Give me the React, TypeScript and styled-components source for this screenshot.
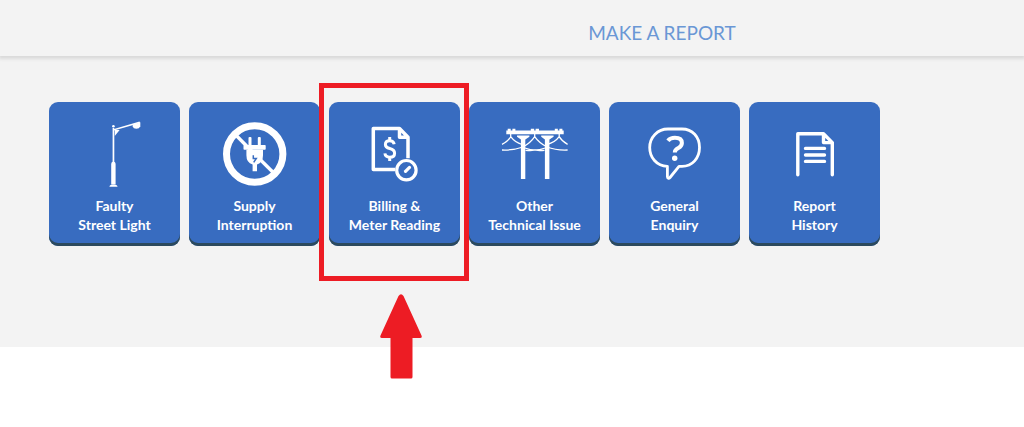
import React from "react";
import styled, { createGlobalStyle } from "styled-components";

const BLUE = "#386cc0";

const GlobalStyle = createGlobalStyle`
  *, *::before, *::after { box-sizing: border-box; }
  body {
    margin: 0;
    background: #ffffff;
    font-family: Lato, "Open Sans", sans-serif;
  }
`;

const Page = styled.div`
  min-height: 100vh;
`;

const Panel = styled.div`
  padding-bottom: 101px;
  background: #f3f3f3;
`;

const Header = styled.header`
  height: 56px;
  padding: 20px 0 0 300px;
  text-align: center;
  box-shadow: 0 2px 3px 1px #dadada;
`;

const Title = styled.h1`
  margin: 0;
  font-size: 19px;
  line-height: 26px;
  font-weight: 400;
  color: #6a97d5;
`;

const TileList = styled.ul`
  display: flex;
  flex-wrap: wrap;
  gap: 9px;
  margin: 0;
  padding: 46px 49px 0;
  list-style: none;
`;

const TileItem = styled.li`
  position: relative;
`;

const Tile = styled.button`
  display: flex;
  flex-direction: column;
  align-items: center;
  gap: 5px;
  width: 131px;
  padding: 17px 0 12px;
  border: 0;
  border-radius: 9px;
  background: ${BLUE};
  box-shadow: inset 0 -3px 0 #2c4a5e;
  color: #ffffff;
  font-family: inherit;
  font-size: 14px;
  line-height: 19px;
  font-weight: 700;
  cursor: pointer;
`;

const Icon = styled.svg`
  display: block;
  width: 81px;
  height: 72px;
  fill: none;
  stroke: #ffffff;
`;

const Line = styled.span`
  display: block;
`;

const Highlight = styled.div`
  position: absolute;
  top: -19px;
  left: -10px;
  width: 150px;
  height: 198px;
  border: 5px solid #ed1c24;
  pointer-events: none;
`;

const Arrow = styled.svg`
  position: absolute;
  top: 192px;
  left: 51px;
  width: 42px;
  height: 85px;
  fill: #ed1c24;
  pointer-events: none;
`;

const StreetLight = () => (
  <g fill="#fff" stroke="none">
    <path d="M38.6 9h1.7v34h-1.700z" />
    <circle cx="39.4" cy="7.2" r="1.3" />
    <path d="M40 10 65.500 2.600l.8 1.300L40 11.600z" />
    <path d="M58.700 5.600 66.300 3.600v3.600q-1 2.500-4 2.600-3 0-3.600-2.400z" />
    <path d="M40.800 11h4.800l-4.800 6z" />
    <path d="M37.200 45q0-2.500 2.200-2.500t2.200 2.500v20.600h-4.400z" />
    <path d="M35.400 67.800q.3-2.200 4-2.200t4.200 2.200z" />
  </g>
);

const NoPlug = () => (
  <>
    <circle cx="40.7" cy="35" r="28.2" strokeWidth="7" />
    <path d="M21 15.3 60.5 54.8" strokeWidth="3.4" />
    <g fill="#fff" stroke="none">
      <rect x="34.5" y="18" width="3" height="9" rx="1" />
      <rect x="43.8" y="18" width="3" height="9" rx="1" />
      <rect x="29.5" y="26" width="22.2" height="4.8" rx=".8" />
      <path d="M32.4 30.800H49v5.500q0 7.500-6 9.200v6.700h-4.400v-6.700q-6.200-1.700-6.200-9.200z" />
    </g>
    <path d="M39.300 36.200v3.200h3l-2.600 4" stroke={BLUE} strokeWidth="1.5" />
  </>
);

const Billing = () => (
  <>
    <path
      d="M41 50.600H19.300V9.400h26.200l8.500 8.800v21M45.500 9.400v8.800H54"
      strokeWidth="3.5"
      strokeLinejoin="round"
    />
    <path
      d="M40.200 25.300q-.6-3.600-4.500-3.600-4.300 0-4.300 3.700 0 3 4.300 4.100 4.900 1.300 4.900 4.700 0 4-4.800 4-4.500 0-4.900-3.800M35.700 18v4M35.700 38v4"
      strokeWidth="3"
    />
    <circle cx="52.4" cy="51.2" r="9.7" strokeWidth="3.2" />
    <path d="m51.500 52.400 4-4" strokeWidth="3.2" strokeLinecap="round" />
  </>
);

const PowerLines = () => (
  <>
    <g fill="#fff" stroke="none">
      <path d="M12.300 11.600h57.400v3.700H12.300z" />
      <path d="M13.700 9.700h3v3h-3zM18.400 9.700h3v3h-3zM36.800 9.700h3.400v3h-3.400zM41.600 9.700H45v3h-3.400zM60.800 9.700h3v3h-3zM65.400 9.700h3v3h-3z" />
      <path d="M23 16.500h12.400v1.300l-4.100 2.600V60h-4.400V20.400L23 17.800zM47.200 16.500h12.400v1.300l-4.200 2.600V60h-4.500V20.400l-3.700-2.600z" />
    </g>
    <path
      d="M16.700 15v2.700Q14 22.500 8 25.300M16.700 17.700Q21 23.500 28 25.500M40.700 15v2.700Q36.500 24 29 28 19 31.500 8 31M40.700 17.700Q45 24 53 28 62 31.500 73.600 31M65.200 15v2.700Q61 23.500 53 25.500M65.200 17.700Q68 22.500 73.600 25.300M29 28.500Q39 32.300 50.500 31.300M53 28.500Q43 32.300 31.500 31.300"
      strokeWidth="1.3"
    />
  </>
);

const Enquiry = () => (
  <>
    <path
      d="M34 10h14c10.500 0 17.500 8 17.500 18.500S58.500 47.400 48 47.400h-3L36 58.500c-1.200 1.400-2.600.8-2.600-1V47.400C22.500 47 15.700 38.500 15.700 28.500S23.500 10 34 10z"
      strokeWidth="2.8"
      strokeLinejoin="round"
    />
    <path
      d="M33.900 21.700q2.400-3 7-3 7 0 7 5.200 0 3-3.600 5.200-3.500 2-3.500 4.300"
      strokeWidth="4"
    />
    <circle cx="40.7" cy="39.2" r="2.7" fill="#fff" stroke="none" />
  </>
);

const History = () => (
  <>
    <path
      d="M23.800 55.800V14.800h25.700l8.800 8.800v32.200M49.500 14.800v8.800h8.800"
      strokeWidth="3.4"
      strokeLinecap="round"
      strokeLinejoin="round"
    />
    <path
      d="M31.500 29.400h19M31.500 36h19M31.500 42.400h19"
      strokeWidth="3.4"
      strokeLinecap="round"
    />
  </>
);

const tiles = [
  { lines: ["Faulty", "Street Light"], Art: StreetLight },
  { lines: ["Supply", "Interruption"], Art: NoPlug },
  { lines: ["Billing &", "Meter Reading"], Art: Billing, highlighted: true },
  { lines: ["Other", "Technical Issue"], Art: PowerLines },
  { lines: ["General", "Enquiry"], Art: Enquiry },
  { lines: ["Report", "History"], Art: History },
];

export default function App() {
  return (
    <Page>
      <GlobalStyle />
      <Panel>
        <Header>
          <Title>MAKE A REPORT</Title>
        </Header>
        <main>
          <TileList>
            {tiles.map(({ lines, Art, highlighted }) => (
              <TileItem key={lines[0]}>
                <Tile type="button">
                  <Icon viewBox="0 0 81 72" aria-hidden="true">
                    <Art />
                  </Icon>
                  <span>
                    {lines.map((line) => (
                      <Line key={line}>{line}</Line>
                    ))}
                  </span>
                </Tile>
                {highlighted && (
                  <>
                    <Highlight />
                    <Arrow viewBox="0 0 42 85" aria-hidden="true">
                      <path d="M18.500 2Q21-1.500 23.500 2L41.500 41.500Q42.500 44 40 44H32.500V83Q32.500 84.500 31 84.500H12Q10.500 84.500 10.500 83V44H2Q-.5 44 .5 41.500z" />
                    </Arrow>
                  </>
                )}
              </TileItem>
            ))}
          </TileList>
        </main>
      </Panel>
    </Page>
  );
}
